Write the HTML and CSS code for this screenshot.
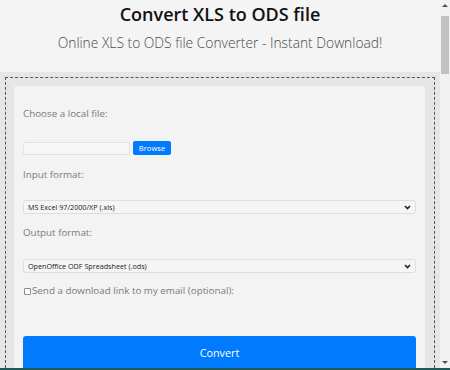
FILE: index.html
```html
<!DOCTYPE html>
<html lang="en">
<head>
    <meta charset="UTF-8">
    <meta name="viewport" content="width=device-width, initial-scale=1.0">
    <title>Convert XLS to ODS file</title>
    <link rel="stylesheet" href="styles.css">
</head>
<body>
    <div class="window">
        <div class="page">
            <header class="page-header">
                <h1>Convert XLS to ODS file</h1>
                <p class="subtitle">Online XLS to ODS file Converter - Instant Download!</p>
            </header>

            <main class="drop-zone">
                <div class="drop-frame">
                    <form class="converter-card">
                        <div class="form-group file-group">
                            <label class="field-label">Choose a local file:</label>
                            <div class="file-row">
                                <span class="file-name"></span>
                                <button type="button" class="browse-btn">Browse</button>
                            </div>
                        </div>

                        <div class="form-group">
                            <label class="field-label" for="inputFormat">Input format:</label>
                            <select id="inputFormat" class="format-select">
                                <option>MS Excel 97/2000/XP (.xls)</option>
                            </select>
                        </div>

                        <div class="form-group">
                            <label class="field-label" for="outputFormat">Output format:</label>
                            <select id="outputFormat" class="format-select">
                                <option>OpenOffice ODF Spreadsheet (.ods)</option>
                            </select>
                        </div>

                        <label class="email-check">
                            <input type="checkbox" class="check-box">Send a download link to my email (optional):
                        </label>

                        <button type="button" class="convert-btn">Convert</button>
                    </form>
                </div>
            </main>
        </div>

        <div class="scrollbar">
            <span class="arrow arrow-up"></span>
            <span class="thumb"></span>
            <span class="arrow arrow-down"></span>
        </div>
    </div>
    <div class="taskbar-edge"></div>
</body>
</html>
```

FILE: styles.css
```css
*, *::before, *::after {
    box-sizing: border-box;
    margin: 0;
    padding: 0;
}

html, body {
    height: 100%;
    overflow: hidden;
    font-family: "Open Sans", "DejaVu Sans", sans-serif;
    color: #333;
    background: #f4f4f4;
}

body {
    display: flex;
    flex-direction: column;
}

.window {
    flex: 1;
    display: flex;
    min-height: 0;
}

.page {
    flex: 1;
    display: flex;
    flex-direction: column;
    min-width: 0;
}

/* header */
.page-header {
    height: 74px;
    background: #f4f4f4;
    text-align: center;
    padding-top: 2px;
}

.page-header h1 {
    font-size: 18px;
    font-weight: 600;
    line-height: 24px;
    color: #111;
}

.subtitle {
    margin-top: 7px;
    font-size: 13.8px;
    font-weight: 300;
    line-height: 20px;
    color: #4a4a4a;
}

/* dashed area */
.drop-zone {
    flex: 1;
    background: #e6e6e6;
    padding: 5px 5px 0 5px;
}

.drop-frame {
    height: 100%;
    border: 1.5px dashed #555;
    border-bottom: none;
    padding: 8px 9px 0 8px;
}

.converter-card {
    height: 100%;
    background: #f3f3f3;
    border-radius: 3px 3px 0 0;
    padding: 21px 9px 0 9px;
    display: flex;
    flex-direction: column;
}

.form-group {
    margin-bottom: 12px;
}

.file-group {
    margin-bottom: 13px;
}

.field-label {
    display: block;
    font-size: 9.8px;
    line-height: 14px;
    color: #7a7a7a;
    margin-bottom: 18px;
}

.form-group + .form-group + .form-group .field-label {
    margin-bottom: 19px;
}

.file-group .field-label {
    margin-bottom: 20px;
}

.file-row {
    display: flex;
    align-items: center;
    gap: 3px;
}

.file-name {
    width: 107px;
    height: 13px;
    border: 1px solid #e2e2e2;
    border-radius: 2px;
    background: #f6f6f6;
}

.browse-btn {
    width: 38px;
    height: 14px;
    border: none;
    border-radius: 2px;
    background: #007bff;
    color: #fff;
    font-family: inherit;
    font-size: 7.6px;
    line-height: 14px;
}

.format-select {
    display: block;
    width: 100%;
    height: 14px;
    padding: 0 4px;
    border: 1px solid #dedede;
    border-radius: 3px;
    appearance: none;
    background: #f5f5f5 url("data:image/svg+xml,%3Csvg xmlns='http://www.w3.org/2000/svg' width='7' height='5' viewBox='0 0 7 5'%3E%3Cpath d='M1 1l2.5 2.5L6 1' fill='none' stroke='%23222' stroke-width='1.6'/%3E%3C/svg%3E") no-repeat right 4px center;
    color: #222;
    font-family: inherit;
    font-size: 7.2px;
}

.email-check {
    display: flex;
    align-items: center;
    font-size: 9.8px;
    line-height: 14px;
    color: #7a7a7a;
    margin-top: -1px;
}

.check-box {
    appearance: none;
    width: 7px;
    height: 7px;
    margin: 0 1px 0 1px;
    border: 1px solid #8a8a8a;
    border-radius: 1px;
    background: #fff;
}

.convert-btn {
    margin-top: 38px;
    height: 32px;
    border: none;
    border-radius: 3px 3px 0 0;
    background: #007bff;
    color: #fff;
    font-family: inherit;
    font-size: 10.8px;
}

/* fake scrollbar */
.scrollbar {
    width: 10px;
    background: #f1f1f1;
    display: flex;
    flex-direction: column;
    align-items: center;
    padding: 4px 0;
}

.thumb {
    width: 8px;
    height: 58px;
    margin-top: 9px;
    background: #c1c1c1;
}

.arrow {
    width: 0;
    height: 0;
    border-left: 3px solid transparent;
    border-right: 3px solid transparent;
}

.arrow-up {
    border-bottom: 3px solid #505050;
}

.arrow-down {
    margin-top: auto;
    border-top: 3px solid #505050;
}

.taskbar-edge {
    height: 2px;
    background: #1f5a5a;
}
```
